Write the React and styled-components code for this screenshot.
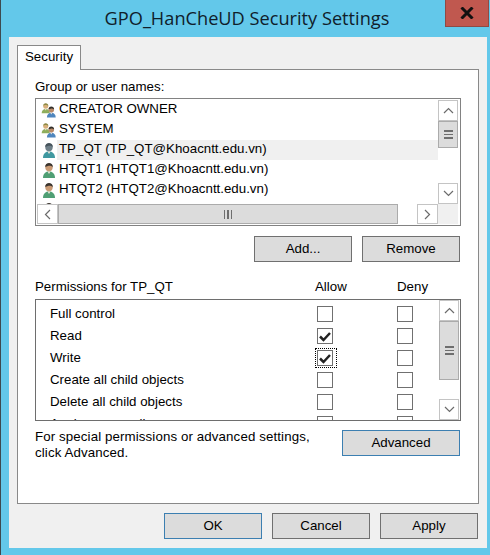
import React from "react";
import styled, { createGlobalStyle } from "styled-components";

const Global = createGlobalStyle`
  html, body { margin: 0; padding: 0; overflow: hidden; }
  * { box-sizing: border-box; }
  body { font-family: "Liberation Sans", "Open Sans", sans-serif; color: #000; font-size: 13.3px; }
`;

const Window = styled.div`
  position: relative;
  width: 490px; height: 555px;
  background: #63c8ea;
  border-left: 1px solid #3d4a50;
  display: flex; flex-direction: column;
`;
const TitleBar = styled.div`
  height: 37px; flex: none;
  display: flex; align-items: center; justify-content: center;
  font-family: "Open Sans", sans-serif;
  font-size: 18.2px; color: #10202a;
  padding: 0 0 2px 3px;
`;
const CloseButton = styled.div`
  position: absolute; top: 0; left: 444px;
  width: 44px; height: 27px;
  background: #c0584f;
  border: 1px solid #8f4a44; border-top: none;
  display: flex; align-items: center; justify-content: center;
`;
const Client = styled.div`
  flex: none; height: 511px;
  margin-left: 8px; width: 478px;
  background: #f0f0f0;
  padding: 8px 8px 0 8px;
  display: flex; flex-direction: column;
`;
const TabStrip = styled.div`display: flex; height: 24px; flex: none; position: relative; z-index: 1;`;
const Tab = styled.div`
  width: 64px; height: 25px;
  background: #fff;
  border: 1px solid #898989; border-bottom: none;
  padding-left: 7px; line-height: 22px;
`;
const Panel = styled.div`
  flex: none; height: 435px; width: 462px;
  background: #fff;
  border: 1px solid #898989;
  padding: 7px 17px 0;
  display: flex; flex-direction: column;
`;
const GroupLabel = styled.div`height: 21px; line-height: 19px;`;
const UserList = styled.div`
  width: 426px; height: 128px; flex: none;
  border: 1px solid #828282;
  padding: 1px;
  display: grid;
  grid-template-columns: 401px 20px;
  grid-template-rows: 104px 20px;
  background: #fff;
`;
const RowsViewport = styled.div`overflow: hidden;`;
const UserRow = styled.div`
  height: 20px; display: flex; align-items: center;
  padding-left: 4px;
`;
const IconSlot = styled.div`width: 16px; height: 18px; flex: none; display: flex; align-items: center; justify-content: center;`;
const UserName = styled.div`
  flex: 1; height: 20px; line-height: 18px; padding-left: 2px;
  background: ${p => (p.$selected ? "#f0f0f0" : "transparent")};
  white-space: nowrap;
`;
const Corner = styled.div`background: #f0f0f0;`;

const VScroll = styled.div`
  width: 20px; height: 100%;
  display: flex; flex-direction: column;
  background: #fff;
`;
const HScroll = styled.div`
  height: 20px; width: 100%; display: flex; background: #fff;
`;
const ArrowBtn = styled.div`
  width: ${p => p.$w}px; height: ${p => p.$h}px; flex: none;
  border: 1px solid #c4c4c4;
  background: #fff;
  display: flex; align-items: center; justify-content: center;
`;
const ThumbV = styled.div`
  height: ${p => p.$h}px; flex: none;
  background: #dcdcdc;
  border: 1px solid #ababab;
  display: flex; flex-direction: column; align-items: center; justify-content: center; gap: 2px;
`;
const GripH = styled.span`width: 9px; height: 1.5px; background: #6e6e6e;`;
const ThumbH = styled.div`
  flex: none; width: ${p => p.$w}px;
  background: #dcdcdc;
  border: 1px solid #ababab;
  display: flex; align-items: center; justify-content: center; gap: 2px;
`;
const GripV = styled.span`width: 1.5px; height: 9px; background: #6e6e6e;`;
const Track = styled.div`flex: 1;`;

const ButtonRow = styled.div`
  display: flex; gap: 10px; justify-content: flex-end;
  margin-top: 10px; padding-right: 1px;
`;
const Button = styled.div`
  width: ${p => p.$w || 98}px; height: 26px;
  background: #dcdcdc;
  border: 1px solid ${p => (p.$default ? "#3c7fb1" : "#707070")};
  display: flex; align-items: center; justify-content: center;
  padding-bottom: 1px;
`;
const PermHeader = styled.div`
  display: grid; grid-template-columns: 280px 82px 64px;
  height: 20px; line-height: 16px;
  margin-top: 17px;
`;
const PermBox = styled.div`
  width: 426px; height: 122px; flex: none;
  border: 1px solid #6e6e6e;
  display: flex; padding: 0 1px 0 0;
  background: #fff;
`;
const PermRows = styled.div`flex: 1; overflow: hidden; padding-top: 3px;`;
const PermRow = styled.div`
  height: 22px; display: grid; grid-template-columns: 267px 80px 16px;
  align-items: center; padding-left: 14px;
`;
const PermName = styled.span`line-height: 20px; padding-bottom: 1px;`;
const Check = styled.div`
  position: relative;
  width: 16px; height: 16px;
  border: 1px solid #707070; background: #fff;
  display: flex; align-items: center; justify-content: center;
`;
const FocusRing = styled.div`
  position: absolute; left: -3px; top: -3px; width: 22px; height: 20px;
  border: 1px dotted #000;
`;
const AdvancedRow = styled.div`
  display: flex; justify-content: space-between;
  margin-top: 9px; padding-right: 1px;
`;
const Note = styled.div`line-height: 15.5px; margin-top: -1px; letter-spacing: 0.11px;`;
const Footer = styled.div`
  display: flex; justify-content: flex-end; gap: 10px;
  margin-top: 9px; padding-right: 1px;
`;

const Up = () => <svg width="11" height="7" viewBox="0 0 11 7"><path d="M1 6L5.5 1.5L10 6" fill="none" stroke="#6b6b6b" strokeWidth="1.2"/></svg>;
const Down = () => <svg width="11" height="7" viewBox="0 0 11 7"><path d="M1 1L5.5 5.5L10 1" fill="none" stroke="#6b6b6b" strokeWidth="1.2"/></svg>;
const Left = () => <svg width="7" height="11" viewBox="0 0 7 11"><path d="M6 1L1.5 5.5L6 10" fill="none" stroke="#6b6b6b" strokeWidth="1.2"/></svg>;
const Right = () => <svg width="7" height="11" viewBox="0 0 7 11"><path d="M1 1L5.5 5.5L1 10" fill="none" stroke="#6b6b6b" strokeWidth="1.2"/></svg>;
const Grip = ({ C }) => <><C /><C /><C /></>;

const Person = ({ x = 0, y = 0, head, hair, body, scale = 1 }) => (
  <g transform={`translate(${x} ${y}) scale(${scale})`}>
    <path d="M1 16c0-4 2.400-6 4.500-6.500h3c2.100.5 4.500 2.500 4.500 6.500z" fill={body} />
    <path d="M5.500 9.500L7 12l1.500-2.500z" fill="#e9e3d6" />
    <circle cx="7" cy="5.500" r="3.700" fill={head} />
    <path d="M3.200 5.200C3 2.400 5 1 7 1s4 1.400 3.800 4.200C9.500 3.700 7.500 3.400 6 3.900 5 4.200 3.900 4.300 3.200 5.200z" fill={hair} />
  </g>
);
const UserIcon = ({ selected }) => (
  <svg width="15" height="17" viewBox="0 0 15 17">
    {selected
      ? <Person head="#6e7f88" hair="#47545c" body="#3f98a0" />
      : <Person head="#c99a74" hair="#3b352f" body="#4f9f74" />}
  </svg>
);
const GroupIcon = () => (
  <svg width="17" height="16" viewBox="0 0 17 16">
    <Person x={0} y={0} scale={0.72} head="#d8b07c" hair="#8f8a45" body="#8fae5c" />
    <Person x={5.500} y={3.500} scale={0.78} head="#b98a68" hair="#33302c" body="#4f86bd" />
  </svg>
);
const Tick = () => (
  <svg width="12" height="11" viewBox="0 0 12 11">
    <path d="M1 5.500L4.500 9L11 2" fill="none" stroke="#222" strokeWidth="2.500" />
  </svg>
);
const CloseX = () => (
  <svg width="14" height="12" viewBox="0 0 14 12">
    <path d="M1.500 .5L12.500 11.500M12.500 .5L1.500 11.500" stroke="#111" strokeWidth="3" />
  </svg>
);

const users = [
  { name: "CREATOR OWNER", group: true },
  { name: "SYSTEM", group: true },
  { name: "TP_QT (TP_QT@Khoacntt.edu.vn)", selected: true },
  { name: "HTQT1 (HTQT1@Khoacntt.edu.vn)" },
  { name: "HTQT2 (HTQT2@Khoacntt.edu.vn)" },
  { name: "HTQT3 (HTQT3@Khoacntt.edu.vn)" },
];
const perms = [
  { name: "Full control" },
  { name: "Read", allow: true },
  { name: "Write", allow: true, focus: true },
  { name: "Create all child objects" },
  { name: "Delete all child objects" },
  { name: "Apply group policy" },
];

export default function App() {
  return (
    <>
      <Global />
      <Window>
        <TitleBar>GPO_HanCheUD Security Settings</TitleBar>
        <CloseButton><CloseX /></CloseButton>
        <Client>
          <TabStrip><Tab>Security</Tab></TabStrip>
          <Panel>
            <GroupLabel>Group or user names:</GroupLabel>
            <UserList>
              <RowsViewport>
                {users.map(u => (
                  <UserRow key={u.name}>
                    <IconSlot>{u.group ? <GroupIcon /> : <UserIcon selected={u.selected} />}</IconSlot>
                    <UserName $selected={u.selected}>{u.name}</UserName>
                  </UserRow>
                ))}
              </RowsViewport>
              <VScroll>
                <ArrowBtn $w={20} $h={21}><Up /></ArrowBtn>
                <ThumbV $h={27}><Grip C={GripH} /></ThumbV>
                <Track />
                <ArrowBtn $w={20} $h={21}><Down /></ArrowBtn>
              </VScroll>
              <HScroll>
                <ArrowBtn $w={21} $h={20}><Left /></ArrowBtn>
                <ThumbH $w={340}><Grip C={GripV} /></ThumbH>
                <Track />
                <ArrowBtn $w={21} $h={20}><Right /></ArrowBtn>
              </HScroll>
              <Corner />
            </UserList>
            <ButtonRow>
              <Button>Add...</Button>
              <Button>Remove</Button>
            </ButtonRow>
            <PermHeader>
              <span>Permissions for TP_QT</span>
              <span>Allow</span>
              <span>Deny</span>
            </PermHeader>
            <PermBox>
              <PermRows>
                {perms.map(p => (
                  <PermRow key={p.name}>
                    <PermName>{p.name}</PermName>
                    <Check>{p.allow && <Tick />}{p.focus && <FocusRing />}</Check>
                    <Check />
                  </PermRow>
                ))}
              </PermRows>
              <VScroll>
                <ArrowBtn $w={20} $h={21}><Up /></ArrowBtn>
                <ThumbV $h={59}><Grip C={GripH} /></ThumbV>
                <Track />
                <ArrowBtn $w={20} $h={21}><Down /></ArrowBtn>
              </VScroll>
            </PermBox>
            <AdvancedRow>
              <Note>For special permissions or advanced settings,<br />click Advanced.</Note>
              <Button $w={118} $default>Advanced</Button>
            </AdvancedRow>
          </Panel>
          <Footer>
            <Button $default>OK</Button>
            <Button>Cancel</Button>
            <Button>Apply</Button>
          </Footer>
        </Client>
      </Window>
    </>
  );
}
